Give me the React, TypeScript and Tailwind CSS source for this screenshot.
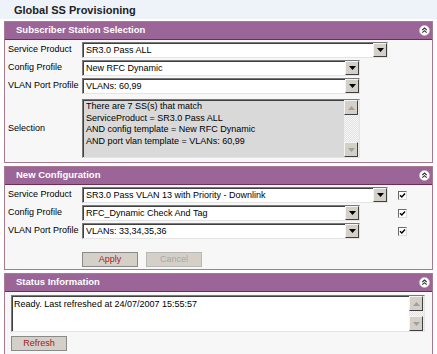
import React from 'react';

const font = "font-['Liberation_Sans',Arial,sans-serif]";

function CollapseIcon() {
  return (
    <svg width="11" height="11" viewBox="0 0 11 11">
      <circle cx="5.5" cy="5.5" r="5" fill="#fff" stroke="#d8c8d6" strokeWidth="0.6" />
      <path d="M3.3 5 L5.5 3 L7.7 5 M3.3 7.7 L5.5 5.7 L7.7 7.7" fill="none" stroke="#333" strokeWidth="1.1" />
    </svg>
  );
}

function ArrowButton({ dir = 'down', dim = false, className = '' }: { dir?: 'up' | 'down'; dim?: boolean; className?: string }) {
  return (
    <div
      className={`w-[14px] flex items-center justify-center bg-[#d4d0c8] border border-t-[#f4f4f4] border-l-[#f4f4f4] border-b-[#404040] border-r-[#404040] ${className}`}
    >
      <svg width="7" height="4" viewBox="0 0 7 4">
        {dir === 'down' ? (
          <path d="M0 0 H7 L3.5 4 Z" fill={dim ? '#a0a0a0' : '#000'} />
        ) : (
          <path d="M0 4 H7 L3.5 0 Z" fill={dim ? '#a0a0a0' : '#000'} />
        )}
      </svg>
    </div>
  );
}

function Select({ value, width }: { value: string; width: string }) {
  return (
    <div
      className={`${width} h-[16px] flex bg-white border border-t-[#7a7a7a] border-l-[#7a7a7a] border-b-[#e4e4e4] border-r-[#e4e4e4] shadow-[inset_1px_1px_0_#404040]`}
    >
      <div className="flex-1 pl-[3px] pt-[1px] leading-[12px] text-black whitespace-nowrap overflow-hidden">{value}</div>
      <ArrowButton />
    </div>
  );
}

function Checkbox() {
  return (
    <div className="w-[9px] h-[9px] bg-white border border-t-[#6a6a6a] border-l-[#6a6a6a] border-b-[#dcdcdc] border-r-[#dcdcdc] flex items-center justify-center">
      <svg width="7" height="7" viewBox="0 0 7 7">
        <path d="M1 3.2 L2.8 5 L6 1.5" fill="none" stroke="#000" strokeWidth="1.4" />
      </svg>
    </div>
  );
}

function Scrollbar() {
  return (
    <div className="w-[15px] flex flex-col bg-[repeating-conic-gradient(#e2e2e2_0_25%,#f6f6f6_0_50%)] bg-[length:2px_2px]">
      <ArrowButton dir="up" dim className="h-[15px]" />
      <div className="flex-1" />
      <ArrowButton dir="down" dim className="h-[15px]" />
    </div>
  );
}

function Panel({ title, children }: { title: string; children: React.ReactNode }) {
  return (
    <div className="border border-[#a77a90] bg-[#f7f7f7]">
      <div className="h-[18px] flex items-center justify-between bg-[#9b6597] border-b border-[#6f2d50] pl-[11px] pr-[2px]">
        <span className="text-white font-bold text-[9.5px]">{title}</span>
        <CollapseIcon />
      </div>
      {children}
    </div>
  );
}

function Row({ label, children }: { label: string; children: React.ReactNode }) {
  return (
    <div className="flex items-center">
      <div className="w-[77px] pl-[3px] text-black whitespace-nowrap">{label}</div>
      {children}
    </div>
  );
}

function Button({ label, color, disabled = false }: { label: string; color: string; disabled?: boolean }) {
  return (
    <div
      className={`w-[56px] h-[15px] flex items-center justify-center bg-[#d4d0c8] border ${disabled ? 'border-[#b8b8b8]' : 'border-[#8a8a8a]'} ${color}`}
    >
      {label}
    </div>
  );
}

export default function App() {
  return (
    <div className={`w-[437px] h-[354px] bg-white overflow-hidden text-[9px] ${font}`}>
      <div className="h-[19px] bg-[#eef3fa] pl-[14px] pt-[4px] text-[11px] font-bold leading-[13px] text-[#222]">
        Global SS Provisioning
      </div>

      <div className="pl-[4px] pr-[4px] pt-[2px] flex flex-col gap-[3px]">
        {/* Subscriber station selection */}
        <Panel title="Subscriber Station Selection">
          <div className="pt-[2px] pb-[4px] flex flex-col gap-[2px]">
            <Row label="Service Product">
              <Select value="SR3.0 Pass ALL" width="w-[306px]" />
            </Row>
            <Row label="Config Profile">
              <Select value="New RFC Dynamic" width="w-[278px]" />
            </Row>
            <Row label="VLAN Port Profile">
              <Select value="VLANs: 60,99" width="w-[278px]" />
            </Row>
            <div className="flex items-center mt-[3px]">
              <div className="w-[77px] pl-[3px] text-black">Selection</div>
              <div className="w-[278px] h-[59px] flex bg-[#d9d9d9] border border-t-[#7a7a7a] border-l-[#7a7a7a] border-b-[#e4e4e4] border-r-[#e4e4e4] shadow-[inset_1px_1px_0_#404040]">
                <div className="flex-1 pl-[3px] pt-[1px] leading-[11.5px] text-black">
                  <div>There are 7 SS(s) that match</div>
                  <div>ServiceProduct = SR3.0 Pass ALL</div>
                  <div>AND config template = New RFC Dynamic</div>
                  <div>AND port vlan template = VLANs: 60,99</div>
                </div>
                <Scrollbar />
              </div>
            </div>
          </div>
        </Panel>

        {/* New configuration */}
        <Panel title="New Configuration">
          <div className="pt-[2px] pb-[2px] flex flex-col gap-[2px]">
            <Row label="Service Product">
              <Select value="SR3.0 Pass VLAN 13 with Priority - Downlink" width="w-[306px]" />
              <div className="ml-[10px]"><Checkbox /></div>
            </Row>
            <Row label="Config Profile">
              <Select value="RFC_Dynamic Check And Tag" width="w-[278px]" />
              <div className="ml-[38px]"><Checkbox /></div>
            </Row>
            <Row label="VLAN Port Profile">
              <Select value="VLANs: 33,34,35,36" width="w-[278px]" />
              <div className="ml-[38px]"><Checkbox /></div>
            </Row>
            <div className="flex gap-[8px] pl-[77px] mt-[11px]">
              <Button label="Apply" color="text-[#b01818]" />
              <Button label="Cancel" color="text-[#a8a8a8]" disabled />
            </div>
          </div>
        </Panel>

        {/* Status */}
        <Panel title="Status Information">
          <div className="pl-[6px] pt-[3px] pb-[3px] flex flex-col gap-[4px]">
            <div className="w-[414px] h-[37px] flex bg-white border border-t-[#7a7a7a] border-l-[#7a7a7a] border-b-[#e4e4e4] border-r-[#e4e4e4] shadow-[inset_1px_1px_0_#404040]">
              <div className="flex-1 pl-[2px] pt-[2px] text-black">Ready. Last refreshed at 24/07/2007 15:55:57</div>
              <Scrollbar />
            </div>
            <Button label="Refresh" color="text-[#a01818]" />
          </div>
        </Panel>
      </div>
    </div>
  );
}
